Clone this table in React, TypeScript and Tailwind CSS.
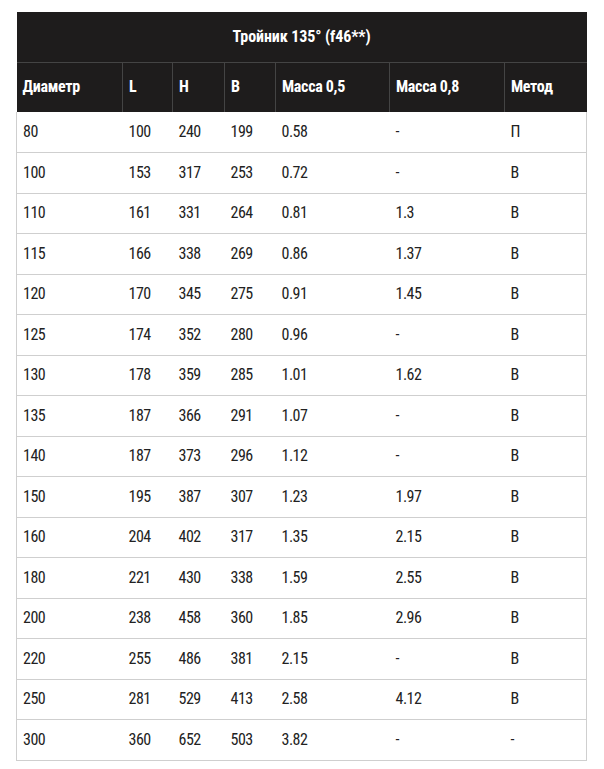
const rows: string[][] = [
  ['80', '100', '240', '199', '0.58', '-', 'П'],
  ['100', '153', '317', '253', '0.72', '-', 'В'],
  ['110', '161', '331', '264', '0.81', '1.3', 'В'],
  ['115', '166', '338', '269', '0.86', '1.37', 'В'],
  ['120', '170', '345', '275', '0.91', '1.45', 'В'],
  ['125', '174', '352', '280', '0.96', '-', 'В'],
  ['130', '178', '359', '285', '1.01', '1.62', 'В'],
  ['135', '187', '366', '291', '1.07', '-', 'В'],
  ['140', '187', '373', '296', '1.12', '-', 'В'],
  ['150', '195', '387', '307', '1.23', '1.97', 'В'],
  ['160', '204', '402', '317', '1.35', '2.15', 'В'],
  ['180', '221', '430', '338', '1.59', '2.55', 'В'],
  ['200', '238', '458', '360', '1.85', '2.96', 'В'],
  ['220', '255', '486', '381', '2.15', '-', 'В'],
  ['250', '281', '529', '413', '2.58', '4.12', 'В'],
  ['300', '360', '652', '503', '3.82', '-', '-'],
]

const headers = ['Диаметр', 'L', 'H', 'B', 'Масса 0,5', 'Масса 0,8', 'Метод']
const widths = ['w-[106px]', 'w-[50px]', 'w-[52px]', 'w-[51px]', 'w-[114px]', 'w-[115px]', 'w-[82px]']

export default function App() {
  return (
    <div className="min-h-[769px] bg-white pt-3 pl-4 font-['Roboto_Condensed',Roboto,sans-serif]">
      <table className="w-[570px] table-fixed border-collapse">
        <colgroup>
          {widths.map((w, i) => (
            <col key={i} className={w} />
          ))}
        </colgroup>
        <thead>
          {/* title */}
          <tr className="h-[50px] bg-[#1e1c1c]">
            <th
              colSpan={7}
              className="border-b border-[#444] text-center text-[16px] font-bold tracking-[-0.1px] text-white"
            >
              Тройник 135° (f46**)
            </th>
          </tr>
          <tr className="h-[50px] bg-[#1e1c1c]">
            {headers.map((h, i) => (
              <th
                key={h}
                className={`px-1.5 text-left text-[16px] font-bold tracking-[-0.3px] text-white ${
                  i < 6 ? 'border-r border-[#444]' : ''
                }`}
              >
                {h}
              </th>
            ))}
          </tr>
        </thead>
        <tbody>
          {rows.map((r, ri) => (
            <tr key={ri} className="h-[40.5px] border-x border-b border-[#cfcfcf]">
              {r.map((c, ci) => (
                <td key={ci} className="px-1.5 text-[16px] tracking-[-0.5px] text-[#222]">
                  {c}
                </td>
              ))}
            </tr>
          ))}
        </tbody>
      </table>
    </div>
  )
}
